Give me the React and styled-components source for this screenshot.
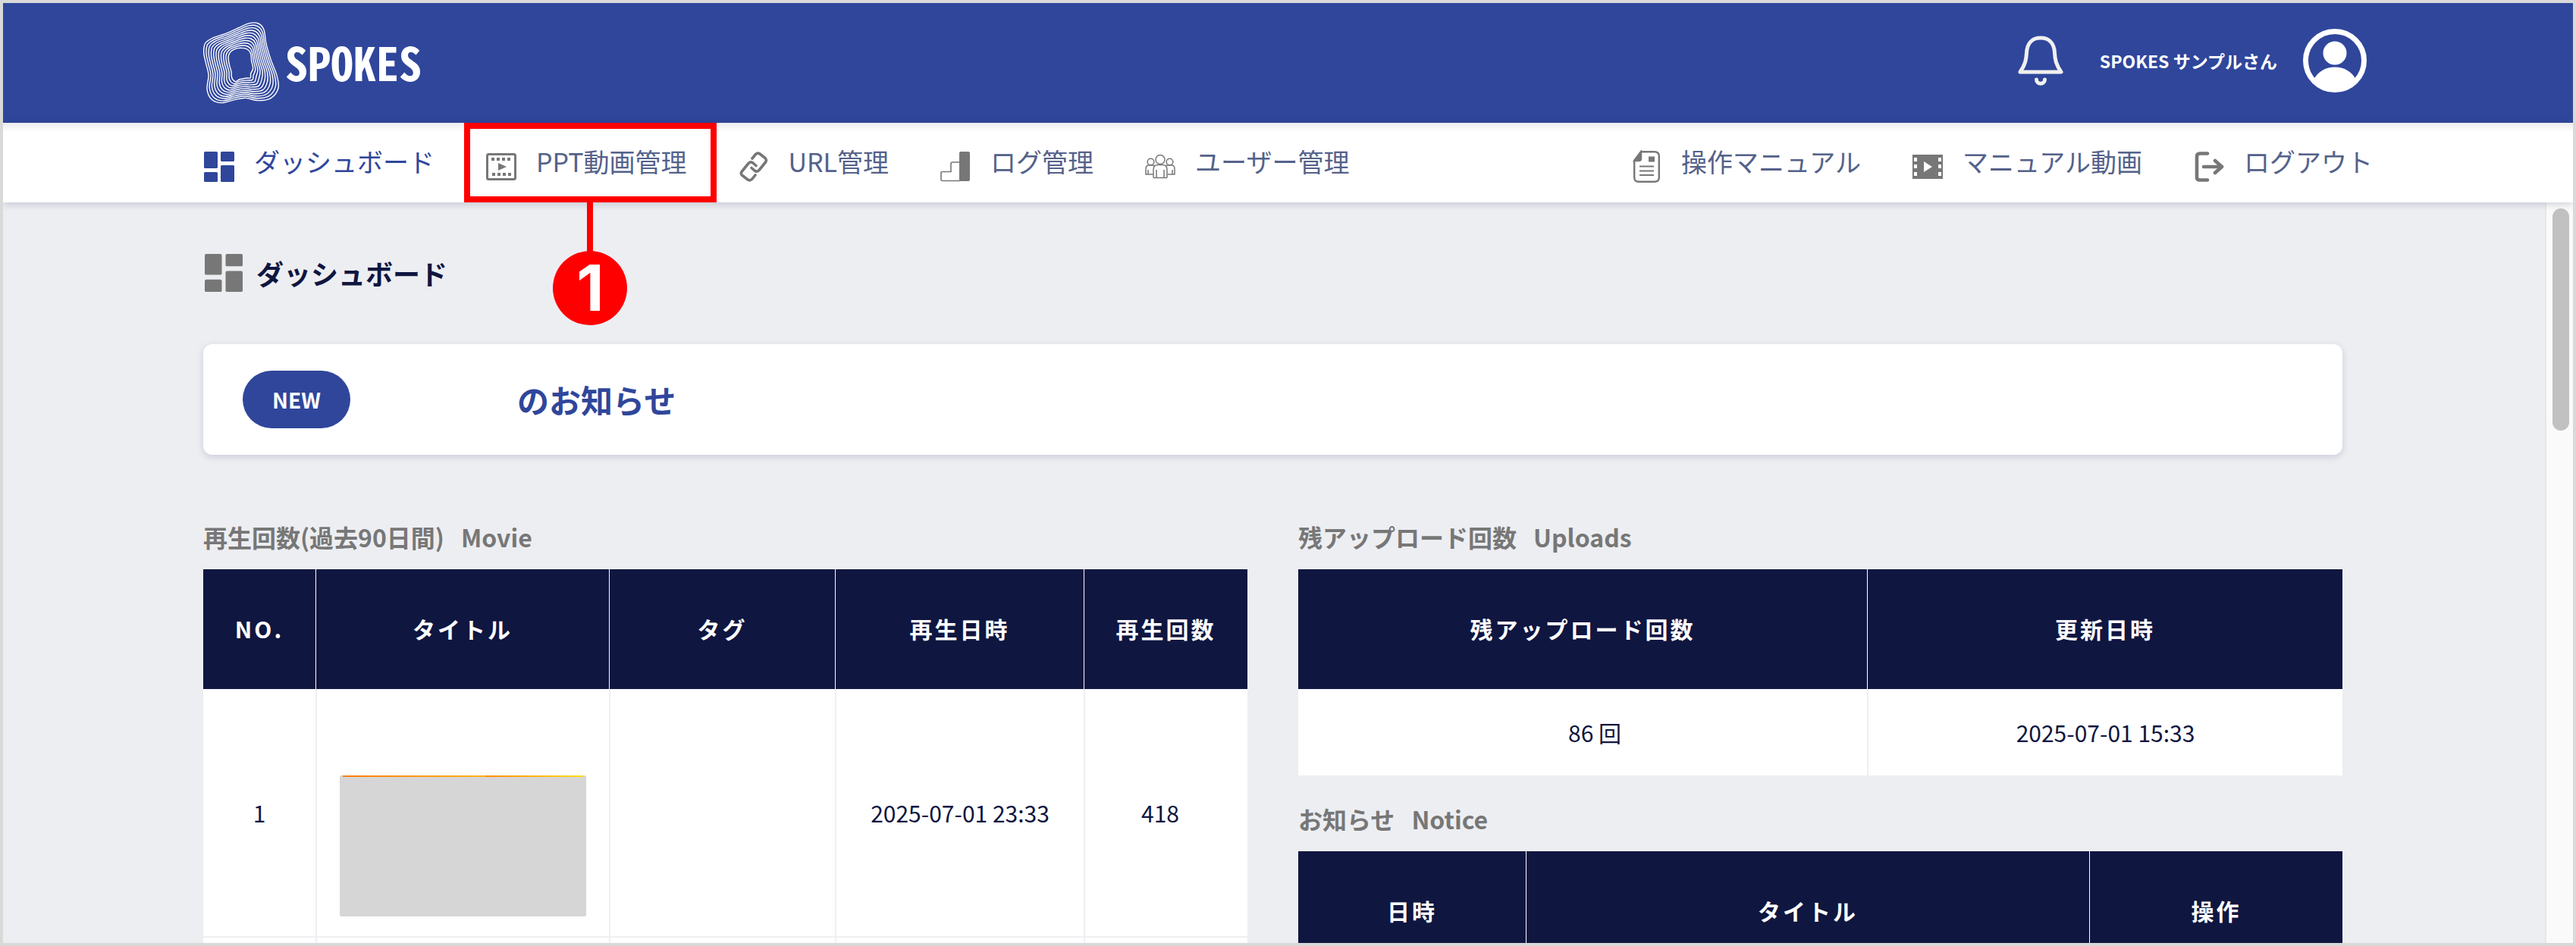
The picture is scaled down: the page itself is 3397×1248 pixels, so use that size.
import React from "react";
import styled, { createGlobalStyle } from "styled-components";

const color = {
  brand: "#2f469b",
  navy: "#0f1640",
  nav: "#54628a",
  gray: "#777777",
  page: "#edeef2",
  line: "#efeff3",
  alert: "#ff0000",
};

const GlobalStyle = createGlobalStyle`
  *, *::before, *::after { box-sizing: border-box; }
  body {
    margin: 0;
    font-family: "Noto Sans CJK JP", "Noto Sans", sans-serif;
    color: ${color.navy};
    background: ${color.page};
  }
  a { color: inherit; text-decoration: none; }
`;

const Frame = styled.div`
  display: flex;
  flex-direction: column;
  height: 100vh;
  overflow: hidden;
  border: 4px solid #d9d9d9;
  background: ${color.page};
`;

const TopBar = styled.header`
  display: flex;
  flex: none;
  align-items: center;
  justify-content: space-between;
  height: 158px;
  padding: 0 272px 0 264px;
  background: ${color.brand};
  color: #fff;
`;

const Brand = styled.a`
  display: flex;
  align-items: center;
  gap: 8px;
  font-family: "Noto Sans Mono CJK JP", "DejaVu Sans Mono", monospace;
  font-size: 60px;
  font-weight: 700;
  line-height: 60px;
`;

const BrandName = styled.span`
  padding-bottom: 4px;
`;

const Account = styled.div`
  display: flex;
  align-items: center;
  padding-bottom: 6px;
`;

const BellButton = styled.button`
  display: flex;
  margin: 0 48px 0 0;
  padding: 0;
  border: 0;
  background: none;
  color: #f0f0f0;
`;

const UserName = styled.span`
  margin-right: 34px;
  font-size: 23px;
  font-weight: 700;
  line-height: 36px;
`;

const NavBar = styled.nav`
  position: relative;
  z-index: 1;
  display: flex;
  flex: none;
  justify-content: space-between;
  height: 105px;
  padding: 0 264px 0 265px;
  background: linear-gradient(#ececee, #fff 12px);
  box-shadow: 0 2px 10px rgba(20, 30, 70, 0.2);
`;

const NavGroup = styled.div`
  display: flex;
  gap: 68px;
`;

const NavItem = styled.div`
  position: relative;
  display: flex;
`;

const NavLink = styled.a`
  display: flex;
  align-items: center;
  gap: 26px;
  padding-bottom: 4px;
  color: ${(p) => (p.$active ? color.brand : color.nav)};
  font-size: 34px;
  line-height: 48px;
  white-space: nowrap;

  svg {
    margin-top: 14px;
    color: ${(p) => (p.$active ? color.brand : color.gray)};
  }
`;

const Highlight = styled.div`
  position: absolute;
  inset: 0 -39px 0 -29px;
  border: 8px solid ${color.alert};
  pointer-events: none;
`;

const Callout = styled.div`
  position: absolute;
  top: 100%;
  left: 50%;
  display: flex;
  flex-direction: column;
  align-items: center;
  transform: translateX(-50%);
`;

const CalloutStem = styled.div`
  width: 8px;
  height: 76px;
  background: ${color.alert};
`;

const CalloutNumber = styled.div`
  display: flex;
  align-items: center;
  justify-content: center;
  width: 98px;
  height: 98px;
  margin-top: -4px;
  border-radius: 50%;
  background: ${color.alert};
  color: #fff;
  font-family: Inter, sans-serif;
  font-size: 84px;
  font-weight: 700;
  line-height: 98px;
`;

const Body = styled.div`
  display: flex;
  flex: 1;
  min-height: 0;
`;

const Main = styled.main`
  flex: 1;
  min-width: 0;
  overflow: hidden;
  padding: 68px 267px 0 264px;
`;

const PageTitle = styled.h1`
  display: flex;
  align-items: center;
  gap: 18px;
  height: 50px;
  margin: 0 0 69px;
  padding-left: 2px;
  font-size: 36px;
  font-weight: 700;

  svg { color: ${color.gray}; }
`;

const NewsCard = styled.section`
  display: flex;
  align-items: center;
  gap: 220px;
  height: 146px;
  margin-bottom: 86px;
  padding: 0 52px;
  border-radius: 12px;
  background: #fff;
  box-shadow: 0 3px 10px rgba(30, 30, 80, 0.16);
`;

const Badge = styled.span`
  width: 142px;
  border-radius: 38px;
  background: ${color.brand};
  color: #fff;
  font-size: 28px;
  font-weight: 700;
  line-height: 76px;
  text-align: center;
`;

const NewsLink = styled.a`
  color: ${color.brand};
  font-size: 42px;
  font-weight: 700;
  line-height: 60px;
`;

const Columns = styled.div`
  display: grid;
  grid-template-columns: 1fr 1fr;
  gap: 67px;
  align-items: start;
`;

const Stack = styled.div`
  display: grid;
  gap: 35px;
`;

const SectionTitle = styled.h2`
  display: flex;
  gap: 22px;
  margin: 0 0 21px;
  color: ${color.gray};
  font-size: 32px;
  font-weight: 700;
  line-height: 44px;
`;

const Table = styled.table`
  width: 100%;
  table-layout: fixed;
  border-collapse: separate;
  border-spacing: 0;
  background: #fff;
`;

const Th = styled.th`
  width: ${(p) => p.$width};
  height: 158px;
  padding: 0 0 2px;
  background: ${color.navy};
  color: #fff;
  font-size: 30px;
  font-weight: 700;
  letter-spacing: 3px;

  & + & { border-left: 1px solid #fff; }
`;

const Td = styled.td`
  height: ${(p) => p.$height};
  padding: ${(p) => p.$padding || "0"};
  font-size: 30px;
  text-align: center;

  & + & { border-left: 2px solid ${color.line}; }
  tr + tr > & { border-top: 2px solid ${color.line}; }
`;

const Thumbnail = styled.div`
  height: 186px;
  margin: 87px 30px 0;
  border-radius: 2px;
  background:
    linear-gradient(90deg, #ff7d0a, #ffb21a) 4px 0 / 58% 2px no-repeat,
    linear-gradient(90deg, #ff8a0a, #ffdc1a) right 4px top 0 / 41% 2px no-repeat,
    #d6d6d6;
`;

const ScrollTrack = styled.div`
  flex: none;
  width: 37px;
  padding: 8px 5px 0 8px;
  border-left: 2px solid #e6e6e6;
  background: #fafafa;
`;

const ScrollThumb = styled.div`
  height: 293px;
  border-radius: 11px;
  background: #c1c1c1;
`;

/* Logo mark: concentric contours blended between an outer and an inner outline. */
const OUTER = [[24,145],[30,108],[60,87],[110,70],[160,48],[205,29],[240,30],[262,55],[271,110],[290,175],[313,235],[319,285],[290,325],[240,335],[190,325],[145,332],[95,344],[55,330],[37,290],[43,235],[32,185]];
const INNER = [[122,175],[122,158],[130,142],[143,133],[158,128],[175,127],[192,130],[205,140],[211,155],[213,178],[219,208],[210,228],[209,245],[194,246],[178,249],[164,252],[150,260],[139,252],[134,240],[133,220],[126,196]];

const contour = (t) => {
  const pts = OUTER.map(([x, y], i) => [
    x + (INNER[i][0] - x) * t,
    y + (INNER[i][1] - y) * t,
  ]);
  const n = pts.length;
  const at = (i) => pts[(i + n) % n];
  let d = `M${at(0)[0].toFixed(1)} ${at(0)[1].toFixed(1)}`;
  for (let i = 0; i < n; i += 1) {
    const [a, b, c, e] = [at(i - 1), at(i), at(i + 1), at(i + 2)];
    const nums = [
      b[0] + (c[0] - a[0]) / 6, b[1] + (c[1] - a[1]) / 6,
      c[0] - (e[0] - b[0]) / 6, c[1] - (e[1] - b[1]) / 6,
      c[0], c[1],
    ].map((v) => v.toFixed(1));
    d += `C${nums.join(" ")}`;
  }
  return `${d}Z`;
};

const RINGS = Array.from({ length: 11 }, (_, i) => contour(i / 10));

const LogoMark = () => (
  <svg width="100" height="108" viewBox="22 24 300 324" fill="none" stroke="#fff" strokeWidth="4.2" aria-hidden="true">
    {RINGS.map((d) => <path key={d} d={d} />)}
  </svg>
);

const BellIcon = () => (
  <svg width="60" height="66" viewBox="0 0 60 66" fill="none" stroke="currentColor" strokeWidth="5" strokeLinejoin="round" aria-hidden="true">
    <path d="M3 48C10 38 11 31 11.500 23C12 9 20 3 30 3S48 9 48.500 23C49 31 50 38 57 48Z" />
    <path d="M24.500 58C24.500 65 35.500 65 35.500 58" strokeLinecap="round" />
  </svg>
);

const AvatarIcon = () => (
  <svg width="84" height="84" viewBox="0 0 84 84" aria-hidden="true">
    <circle cx="42" cy="42" r="38.500" fill="none" stroke="#fff" strokeWidth="7" />
    <circle cx="42" cy="32" r="15.500" fill="#fff" />
    <path d="M14 67C20 56 30 50.500 42 50.500S64 56 70 67C63 76 53 81 42 81S21 76 14 67Z" fill="#fff" />
  </svg>
);

const DashboardIcon = ({ size = 40 }) => (
  <svg width={size} height={size} viewBox="0 0 40 40" fill="currentColor" aria-hidden="true">
    <rect x="0" y="0" width="18" height="22" rx="1.500" />
    <rect x="22" y="0" width="18" height="13" rx="1.500" />
    <rect x="0" y="27" width="18" height="13" rx="1.500" />
    <rect x="22" y="18" width="18" height="22" rx="1.500" />
  </svg>
);

const FilmOutlineIcon = () => (
  <svg width="40" height="40" viewBox="0 0 40 40" fill="currentColor" aria-hidden="true">
    <rect x="1.500" y="3.500" width="37" height="33" rx="2" fill="none" stroke="currentColor" strokeWidth="3" />
    {[7, 14, 21, 28].map((x) => (
      <React.Fragment key={x}>
        <rect x={x} y="8" width="4" height="4" />
        <rect x={x + 1} y="28" width="4" height="4" />
      </React.Fragment>
    ))}
    <path d="M16 15L27 20L16 25Z" />
  </svg>
);

const LinkIcon = () => (
  <svg width="40" height="40" viewBox="0 0 40 40" fill="none" stroke="currentColor" strokeWidth="3.600" strokeLinecap="round" strokeLinejoin="round" aria-hidden="true">
    <path d="M18 9L22.500 3.500Q25 1 28 3L35 8.500Q37.500 11 35.500 14L27 24.500Q24 27.500 21 25L17 21.500" />
    <path d="M22 31L18 36Q15 39 12 37L5 31.500Q2 29 4.500 26L13 15.500Q16 12.500 19 15L23 18.500" />
  </svg>
);

const StepsIcon = () => (
  <svg width="40" height="40" viewBox="0 0 40 40" aria-hidden="true">
    <path d="M26 38.500H3Q1 38.500 1 36.500V28Q1 26.500 3 26.500H14V16Q14 14 16 14H26" fill="none" stroke="currentColor" strokeWidth="1.600" />
    <rect x="25" y="0" width="14" height="39" rx="2" fill="currentColor" />
  </svg>
);

const UsersIcon = () => (
  <svg width="40" height="40" viewBox="0 0 40 40" fill="none" stroke="currentColor" strokeWidth="1.500" aria-hidden="true">
    <circle cx="20" cy="10.500" r="6" />
    <circle cx="7.500" cy="13.500" r="4.300" />
    <circle cx="32.500" cy="13.500" r="4.300" />
    <path d="M11 33V24Q11 17.500 17 17.500H23Q29 17.500 29 24V33M11 34.500H29M11 33V34.500M29 33V34.500M15 24V34.500M25 24V34.500" />
    <path d="M10.500 30H1V23Q1 18 5 18H10Q12 18 12.500 19M4 24V30M29.500 30H39V23Q39 18 35 18H30Q28 18 27.500 19M36 24V30" />
  </svg>
);

const DocumentIcon = () => (
  <svg width="40" height="44" viewBox="0 0 40 44" fill="none" stroke="currentColor" strokeWidth="2.400" aria-hidden="true">
    <path d="M4.200 14L13 2.200H31Q36.800 2.200 36.800 8V36Q36.800 41.800 31 41.800H10Q4.200 41.800 4.200 36Z" strokeLinejoin="round" />
    <path d="M4.200 14L13 2.200V11Q13 14 10 14Z" fill="currentColor" />
    <rect x="23" y="8.500" width="8" height="7" fill="currentColor" stroke="none" />
    <path d="M11 21.500H30M11 27.500H30M11 33H30" strokeWidth="2" />
  </svg>
);

const FilmIcon = () => (
  <svg width="40" height="40" viewBox="1 1 40 38" aria-hidden="true">
    <rect x="0" y="4" width="42" height="32" fill="currentColor" />
    {[8, 17, 27].map((y) => (
      <React.Fragment key={y}>
        <rect x="3" y={y} width="4" height="5" fill="#fff" />
        <rect x="35" y={y} width="4" height="5" fill="#fff" />
      </React.Fragment>
    ))}
    <path d="M16 13L27 20L16 27Z" fill="#fff" />
  </svg>
);

const LogoutIcon = () => (
  <svg width="40" height="40" viewBox="0 0 40 40" fill="none" stroke="currentColor" strokeWidth="4.600" strokeLinecap="round" strokeLinejoin="round" aria-hidden="true">
    <path d="M18 2.500H8Q4 2.500 4 6.500V34Q4 37.500 8 37.500H18" />
    <path d="M13 20H36M28 12L37 20L28 28" />
  </svg>
);

const MAIN_NAV = [
  { label: "ダッシュボード", Icon: DashboardIcon, active: true },
  { label: "PPT動画管理", Icon: FilmOutlineIcon, step: 1 },
  { label: "URL管理", Icon: LinkIcon },
  { label: "ログ管理", Icon: StepsIcon },
  { label: "ユーザー管理", Icon: UsersIcon },
];

const SUB_NAV = [
  { label: "操作マニュアル", Icon: DocumentIcon },
  { label: "マニュアル動画", Icon: FilmIcon },
  { label: "ログアウト", Icon: LogoutIcon },
];

const Nav = ({ items }) => (
  <NavGroup>
    {items.map(({ label, Icon, active, step }) => (
      <NavItem key={label}>
        <NavLink href="#" $active={active}>
          <Icon />
          {label}
        </NavLink>
        {step && (
          <Highlight>
            <Callout>
              <CalloutStem />
              <CalloutNumber>{step}</CalloutNumber>
            </Callout>
          </Highlight>
        )}
      </NavItem>
    ))}
  </NavGroup>
);

const HeadRow = ({ columns }) => (
  <thead>
    <tr>
      {columns.map(([label, width]) => (
        <Th key={label} scope="col" $width={width}>{label}</Th>
      ))}
    </tr>
  </thead>
);

const Section = ({ title, sub, children }) => (
  <section>
    <SectionTitle>
      <span>{title}</span>
      <span>{sub}</span>
    </SectionTitle>
    {children}
  </section>
);

export default function App() {
  return (
    <Frame>
      <GlobalStyle />
      <TopBar>
        <Brand href="#">
          <LogoMark />
          <BrandName>SPOKES</BrandName>
        </Brand>
        <Account>
          <BellButton type="button" aria-label="通知">
            <BellIcon />
          </BellButton>
          <UserName>SPOKES サンプルさん</UserName>
          <AvatarIcon />
        </Account>
      </TopBar>
      <NavBar>
        <Nav items={MAIN_NAV} />
        <Nav items={SUB_NAV} />
      </NavBar>
      <Body>
        <Main>
          <PageTitle>
            <DashboardIcon size={50} />
            ダッシュボード
          </PageTitle>
          <NewsCard>
            <Badge>NEW</Badge>
            <NewsLink href="#">のお知らせ</NewsLink>
          </NewsCard>
          <Columns>
            <Section title="再生回数(過去90日間)" sub="Movie">
              <Table>
                <HeadRow
                  columns={[["NO.", "148px"], ["タイトル", "387px"], ["タグ", "298px"], ["再生日時", "328px"], ["再生回数", "auto"]]}
                />
                <tbody>
                  <tr>
                    <Td $height="326px">1</Td>
                    <Td><Thumbnail /></Td>
                    <Td />
                    <Td>2025-07-01 23:33</Td>
                    <Td $padding="0 16px 0 0">418</Td>
                  </tr>
                  <tr>
                    <Td $height="326px" />
                    <Td />
                    <Td />
                    <Td />
                    <Td />
                  </tr>
                </tbody>
              </Table>
            </Section>
            <Stack>
              <Section title="残アップロード回数" sub="Uploads">
                <Table>
                  <HeadRow columns={[["残アップロード回数", "750px"], ["更新日時", "auto"]]} />
                  <tbody>
                    <tr>
                      <Td $height="114px" $padding="0 0 0 32px">86 回</Td>
                      <Td>2025-07-01 15:33</Td>
                    </tr>
                  </tbody>
                </Table>
              </Section>
              <Section title="お知らせ" sub="Notice">
                <Table>
                  <HeadRow columns={[["日時", "300px"], ["タイトル", "743px"], ["操作", "auto"]]} />
                </Table>
              </Section>
            </Stack>
          </Columns>
        </Main>
        <ScrollTrack>
          <ScrollThumb />
        </ScrollTrack>
      </Body>
    </Frame>
  );
}
